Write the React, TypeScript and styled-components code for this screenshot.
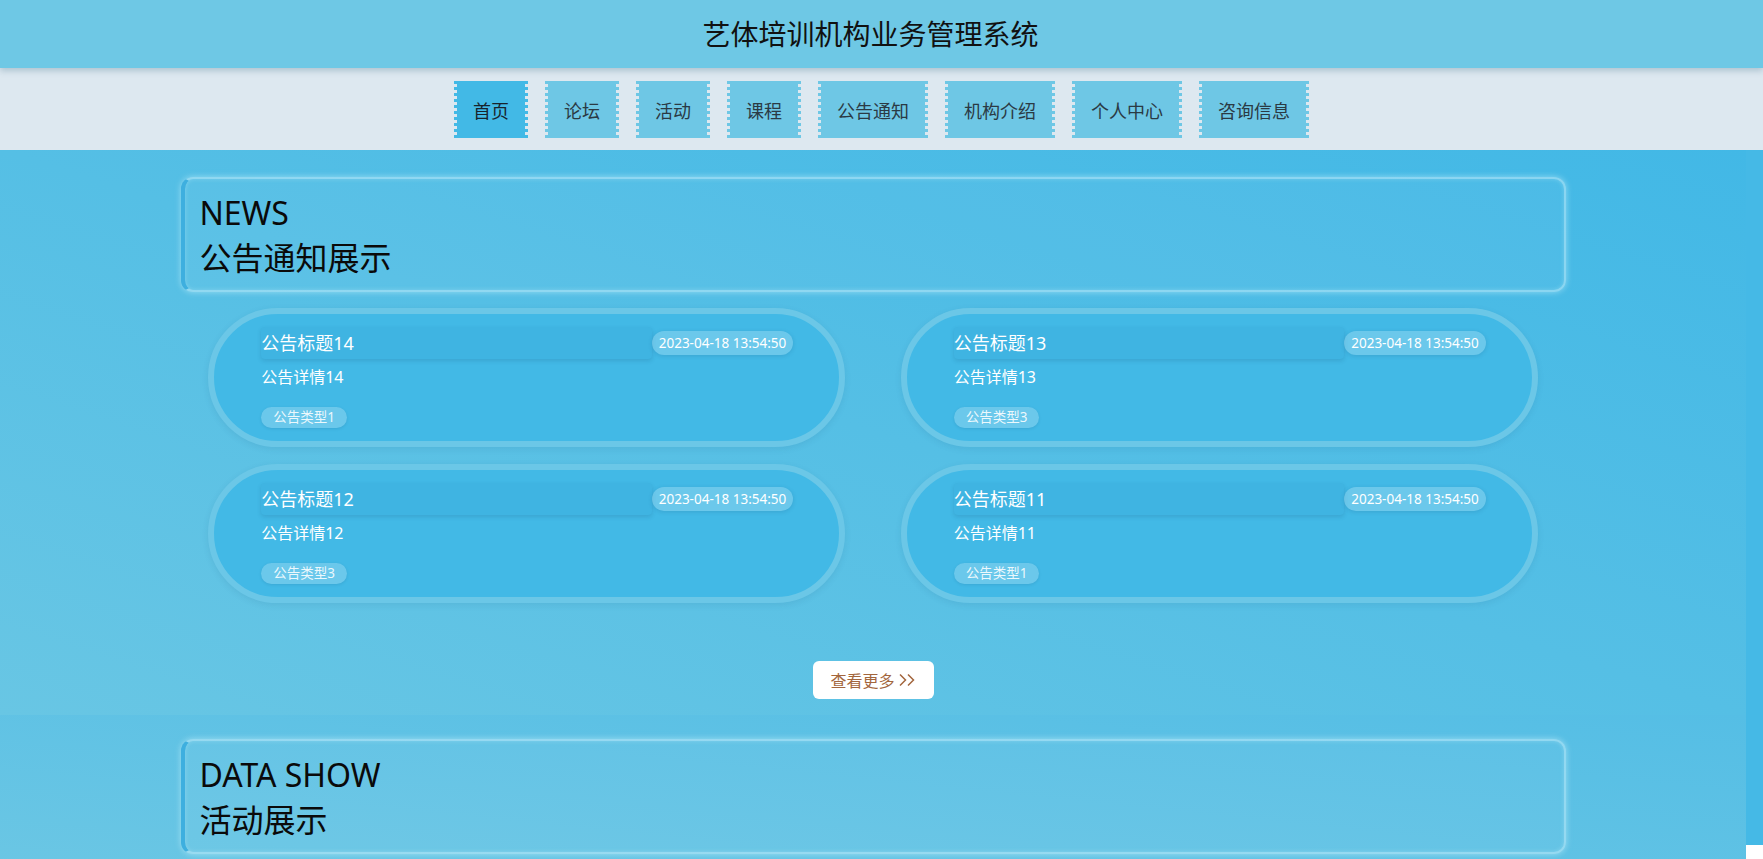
import React from 'react';
import styled, { createGlobalStyle } from 'styled-components';

interface Notice {
  id: number;
  title: string;
  detail: string;
  type: string;
  addtime: string;
}

const navItems = ['首页', '论坛', '活动', '课程', '公告通知', '机构介绍', '个人中心', '咨询信息'];

const notices: Notice[] = [
  { id: 14, title: '公告标题14', detail: '公告详情14', type: '公告类型1', addtime: '2023-04-18 13:54:50' },
  { id: 13, title: '公告标题13', detail: '公告详情13', type: '公告类型3', addtime: '2023-04-18 13:54:50' },
  { id: 12, title: '公告标题12', detail: '公告详情12', type: '公告类型3', addtime: '2023-04-18 13:54:50' },
  { id: 11, title: '公告标题11', detail: '公告详情11', type: '公告类型1', addtime: '2023-04-18 13:54:50' },
];

const DoubleArrow = () => (
  <svg width="18" height="14" viewBox="0 0 18 14" fill="none" stroke="currentColor" strokeWidth="1.5">
    <path d="M2 1.5 L7.5 7 L2 12.5" />
    <path d="M10 1.5 L15.5 7 L10 12.5" />
  </svg>
);

export default function App() {
  return (
    <>
      <GlobalStyle />
      <Header>
        <SiteTitle>艺体培训机构业务管理系统</SiteTitle>
      </Header>
      <NavBar>
        {navItems.map((item, i) => (
          <NavButton key={item} $active={i === 0}>
            {item}
          </NavButton>
        ))}
      </NavBar>
      <Body>
        <Main>
          <NewsSection>
            <SectionTitle>
              <TitleEn>NEWS</TitleEn>
              <TitleCn>公告通知展示</TitleCn>
            </SectionTitle>
            <NoticeList>
              {notices.map((n) => (
                <NoticeCard key={n.id}>
                  <NoticeHead>
                    <NoticeTitle>{n.title}</NoticeTitle>
                    <NoticeTime>{n.addtime}</NoticeTime>
                  </NoticeHead>
                  <NoticeDetail>{n.detail}</NoticeDetail>
                  <NoticeType>{n.type}</NoticeType>
                </NoticeCard>
              ))}
            </NoticeList>
            <MoreButton>
              查看更多
              <DoubleArrow />
            </MoreButton>
          </NewsSection>
          <DataSection>
            <SectionTitle>
              <TitleEn>DATA SHOW</TitleEn>
              <TitleCn>活动展示</TitleCn>
            </SectionTitle>
          </DataSection>
        </Main>
        <SideStrip />
      </Body>
    </>
  );
}

const GlobalStyle = createGlobalStyle`
  html, body {
    margin: 0;
    padding: 0;
    background: #ffffff;
    overflow: hidden;
  }
  body {
    font-family: "Noto Sans", "Noto Sans CJK SC", sans-serif;
  }
  * {
    box-sizing: border-box;
  }
`;

const Header = styled.header`
  position: relative;
  z-index: 2;
  height: 68px;
  padding-right: 22px;
  background: #6ec8e5;
  box-shadow: 0 3px 6px rgba(40, 90, 120, 0.25);
  display: flex;
  justify-content: center;
  align-items: center;
`;

const SiteTitle = styled.h1`
  margin: 0;
  font-size: 28px;
  font-weight: 400;
  line-height: 68px;
  color: #111111;
`;

const NavBar = styled.nav`
  position: relative;
  z-index: 1;
  height: 82px;
  background: #dde8f0;
  display: flex;
  justify-content: center;
  align-items: flex-start;
  padding-top: 13px;
  gap: 17px;
`;

const NavButton = styled.div<{ $active?: boolean }>`
  height: 57px;
  padding: 0 16px;
  display: flex;
  align-items: center;
  font-size: 18px;
  color: ${(p) => (p.$active ? '#18232c' : '#2b3a44')};
  background: ${(p) => (p.$active ? '#42b9e6' : '#6ec7e5')};
  border-left: 3px dotted ${(p) => (p.$active ? '#42b9e6' : '#6ec7e5')};
  border-right: 3px dotted ${(p) => (p.$active ? '#42b9e6' : '#6ec7e5')};
  background-clip: padding-box;
  cursor: pointer;
`;

const Body = styled.div`
  display: flex;
  align-items: flex-start;
`;

const Main = styled.main`
  flex: 1 1 auto;
  min-width: 0;
`;

const SideStrip = styled.div`
  width: 17px;
  height: 695px;
  background: #45b9e6;
`;

const NewsSection = styled.section`
  padding: 27px 0 16px;
  background: linear-gradient(to top right, #68c6e4 0%, #42b8e6 100%);
  display: flex;
  flex-direction: column;
  align-items: center;
`;

const DataSection = styled.section`
  padding: 24px 0 40px;
  background: linear-gradient(to top right, #6cc7e4 0%, #55bee5 100%);
  display: flex;
  flex-direction: column;
  align-items: center;
`;

const SectionTitle = styled.div`
  width: 1385px;
  padding: 11px 18px 10px 15px;
  border: 2px solid rgba(190, 235, 250, 0.55);
  border-left: 4px solid #3eafdf;
  border-radius: 12px;
  background: rgba(255, 255, 255, 0.04);
  box-shadow: 0 0 6px rgba(210, 245, 255, 0.55), inset 0 0 4px rgba(210, 245, 255, 0.3);
  color: #0a0a0a;
`;

const TitleEn = styled.div`
  font-size: 32px;
  line-height: 45px;
`;

const TitleCn = styled.div`
  font-size: 32px;
  line-height: 45px;
`;

const NoticeList = styled.div`
  width: 1385px;
  margin-top: 16px;
  display: flex;
  flex-wrap: wrap;
  justify-content: space-around;
  row-gap: 17px;
`;

const NoticeCard = styled.div`
  width: 46%;
  height: 139px;
  padding: 13px 46px 13px 47px;
  border: 6px solid #6bc7e7;
  border-radius: 70px;
  background: #42b9e6;
  box-shadow: 0 2px 6px rgba(30, 90, 130, 0.12);
  display: flex;
  flex-direction: column;
  align-items: flex-start;
  color: #ffffff;
`;

const NoticeHead = styled.div`
  width: 100%;
  display: flex;
  align-items: center;
`;

const NoticeTitle = styled.div`
  flex: 1 1 auto;
  height: 32px;
  line-height: 32px;
  font-size: 18px;
  border-radius: 4px;
  background: #3fb4e2;
  box-shadow: 0 2px 4px rgba(20, 80, 120, 0.18);
  white-space: nowrap;
  overflow: hidden;
`;

const NoticeTime = styled.div`
  height: 24px;
  line-height: 24px;
  padding: 0 7px;
  font-size: 13.5px;
  border-radius: 12px;
  background: rgba(255, 255, 255, 0.22);
  box-shadow: 0 1px 4px rgba(20, 80, 120, 0.18);
  white-space: nowrap;
`;

const NoticeDetail = styled.div`
  margin-top: 6px;
  font-size: 16px;
  line-height: 24px;
`;

const NoticeType = styled.div`
  margin-top: 18px;
  height: 21px;
  line-height: 21px;
  padding: 0 12px;
  font-size: 13.5px;
  border-radius: 11px;
  background: rgba(255, 255, 255, 0.22);
  color: rgba(255, 255, 255, 0.88);
  box-shadow: 0 1px 3px rgba(20, 80, 120, 0.15);
`;

const MoreButton = styled.button`
  margin-top: 58px;
  width: 121px;
  height: 38px;
  padding: 0;
  border: none;
  border-radius: 6px;
  background: #ffffff;
  color: #a3663d;
  font-family: "Noto Sans", "Noto Sans CJK SC", sans-serif;
  font-size: 16px;
  display: flex;
  align-items: center;
  justify-content: center;
  gap: 3px;
  cursor: pointer;
`;
